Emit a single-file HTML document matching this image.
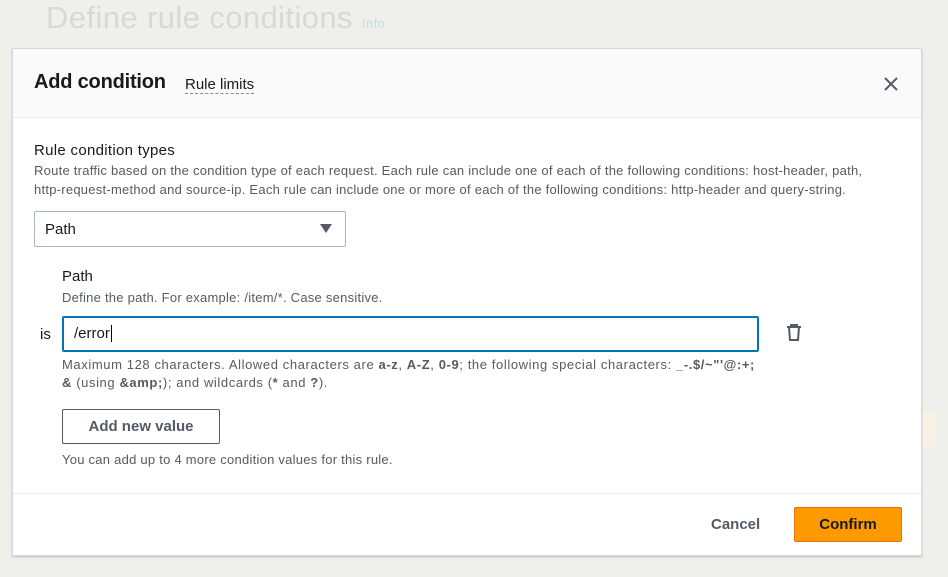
<!DOCTYPE html>
<html><head><meta charset="utf-8"><style>
*{margin:0;padding:0;box-sizing:border-box}
body{width:948px;height:577px;background:#efefec;font-family:"Liberation Sans",sans-serif;position:relative;overflow:hidden;color:#16191f}
.a{position:absolute;white-space:nowrap}
.s{font-size:13px;letter-spacing:0.25px;color:#545b64}
</style></head><body>
<div class="a" style="left:46px;top:0px;font-size:31px;color:#d8d8d6;letter-spacing:0.4px">Define rule conditions <span style="font-size:13px;color:#c7dbe8">Info</span></div>
<div class="a" style="left:12px;top:48px;width:910px;height:508px;background:#fff;border:1px solid #d5dbdb;box-shadow:0 1px 2px rgba(0,0,0,.2)"></div>
<div class="a" style="left:13px;top:49px;width:908px;height:69px;background:#fafafa;border-bottom:1px solid #eaeded"></div>
<div class="a" style="left:34px;top:71px;font-size:20px;font-weight:bold;letter-spacing:-0.2px">Add condition</div>
<div class="a" style="left:185px;top:76px;font-size:15px;border-bottom:1px dashed #888;line-height:17px">Rule limits</div>
<svg class="a" style="left:883px;top:76px" width="16" height="16" viewBox="0 0 16 16"><path d="M2 2L14 14M14 2L2 14" stroke="#545b64" stroke-width="2"/></svg>
<div class="a" style="left:34px;top:142px;font-size:15px;letter-spacing:0.3px">Rule condition types</div>
<div class="a s" style="left:34px;top:161px;line-height:19px">Route traffic based on the condition type of each request. Each rule can include one of each of the following conditions: host-header, path,<br>http-request-method and source-ip. Each rule can include one or more of each of the following conditions: http-header and query-string.</div>
<div class="a" style="left:34px;top:211px;width:312px;height:36px;border:1px solid #aab7b8;border-radius:2px;font-size:15px;padding:9px 0 0 10px">Path</div>
<svg class="a" style="left:320px;top:224px" width="12" height="10"><path d="M0 0H12L6 9Z" fill="#545b64"/></svg>
<div class="a" style="left:62px;top:268px;font-size:15px">Path</div>
<div class="a s" style="left:62px;top:290px">Define the path. For example: /item/*. Case sensitive.</div>
<div class="a" style="left:40px;top:326px;font-size:15px">is</div>
<div class="a" style="left:62px;top:316px;width:697px;height:36px;border:1px solid #0073bb;border-radius:2px;box-shadow:0 0 0 1px #0073bb inset;font-size:15px;padding:8px 0 0 11px">/error<span style="border-left:1px solid #000;margin-left:1px"></span></div>
<svg class="a" style="left:786px;top:324px" width="16" height="18" viewBox="0 0 16 18"><path d="M1 3H15M5 3V1H11V3M3 3L4 16H12L13 3" fill="none" stroke="#545b64" stroke-width="2"/></svg>
<div class="a s" style="left:62px;top:356px;line-height:18px;letter-spacing:0.6px">Maximum 128 characters. Allowed characters are <b>a-z</b>, <b>A-Z</b>, <b>0-9</b>; the following special characters: <b>_-.$/~"'@:+;</b><br><b>&amp;</b> (using <b>&amp;amp;</b>); and wildcards (<b>*</b> and <b>?</b>).</div>
<div class="a" style="left:62px;top:409px;width:158px;height:35px;border:1px solid #545b64;border-radius:2px;font-size:15px;font-weight:bold;color:#545b64;text-align:center;line-height:33px">Add new value</div>
<div class="a s" style="left:62px;top:452px">You can add up to 4 more condition values for this rule.</div>
<div class="a" style="left:13px;top:493px;width:908px;height:1px;background:#eaeded"></div>
<div class="a" style="left:711px;top:516px;font-size:15px;font-weight:bold;color:#545b64">Cancel</div>
<div class="a" style="left:794px;top:507px;width:108px;height:35px;background:#ff9900;border:1px solid #ec7211;border-radius:2px;font-size:15px;font-weight:bold;color:#16191f;text-align:center;line-height:33px">Confirm</div>
<div class="a" style="left:923px;top:412px;width:12px;height:35px;background:#f8f1e4"></div>
</body></html>
